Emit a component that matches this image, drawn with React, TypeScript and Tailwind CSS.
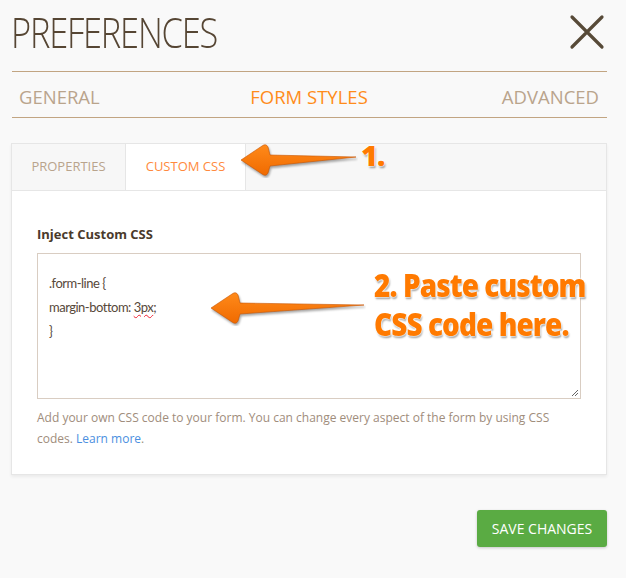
import React from 'react'

const SANS = { fontFamily: '"Open Sans", "Noto Sans", sans-serif' }

function Arrow({ className, width, height }: { className: string; width: number; height: number }) {
  // tip on the left, tail on the right, shaft tapering toward the tail
  return (
    <svg className={className} width={width} height={height} viewBox={`0 0 ${width} ${height}`}>
      <defs>
        <linearGradient id={`g${width}`} x1="0" y1="0" x2="0" y2="1">
          <stop offset="0" stopColor="#ff8a1a" />
          <stop offset="1" stopColor="#f06a00" />
        </linearGradient>
      </defs>
      <path
        d={`M ${width - 2} ${height / 2 - 3} L 32 ${height / 2 - 5} L 30 5 Q 28 1 24 4 L 3 ${height / 2} L 24 ${height - 4} Q 28 ${height - 1} 30 ${height - 5} L 32 ${height / 2 + 6} Z`}
        fill={`url(#g${width})`}
        stroke="#c85400"
        strokeWidth={0.6}
        strokeLinejoin="round"
        style={{ filter: 'drop-shadow(1px 2px 1px rgba(0,0,0,0.35))' }}
      />
    </svg>
  )
}

const LABEL_SHADOW = '0 0 2px #fff, 0 0 2px #fff, 0 0 3px #fff, 1px 2px 2px rgba(0,0,0,0.45)'

export default function App() {
  return (
    <div className="relative w-[626px] h-[578px] bg-[#f9f9f9] pl-3 pr-[19px] overflow-hidden" style={SANS}>
      <div className="flex items-center justify-between pb-2 h-[72px] border-b border-[#c2a582] pr-[2px]">
        <h1 className="text-[43px] font-light leading-none text-[#564634] tracking-[-1.5px] -ml-[1px] scale-x-[0.8] origin-left whitespace-nowrap">
          PREFERENCES
        </h1>
        <svg width="36" height="36" viewBox="0 0 36 36">
          <path d="M3 3 L33 33 M33 3 L3 33" stroke="#574a38" strokeWidth={3.2} strokeLinecap="round" />
        </svg>
      </div>
      <div className="flex items-center justify-between h-[46px] pt-1 border-b border-[#c2a582] pl-[7px] pr-[8px] text-[18.5px]">
        <span className="text-[#b9a48c] w-[120px]">GENERAL</span>
        <span className="text-[#ff8c1a]">FORM STYLES</span>
        <span className="text-[#b9a48c] w-[120px] text-right">ADVANCED</span>
      </div>

      <div className="mt-[25px] -ml-px bg-white border border-[#e6e6e6] shadow-[0_2px_3px_rgba(0,0,0,0.06)] h-[332px]">
        <div className="flex h-[47px] bg-[#f7f7f7] border-b border-[#e6e6e6] text-[13px]">
          <div className="w-[114px] flex items-center justify-center text-[#b9a48c] border-r border-[#e6e6e6]">PROPERTIES</div>
          <div className="w-[120px] flex items-center justify-center text-[#ff8a3d] bg-white border-r border-[#e6e6e6]">CUSTOM CSS</div>
        </div>
        <div className="px-[25px] pt-[34px]">
          <div className="text-[13px] font-bold text-[#4a3a2b]">Inject Custom CSS</div>
          <div
            className="mt-[8px] h-[146px] border border-[#d9cdc2] bg-white relative pl-[11px] pt-[17px] text-[13px] leading-[24px] tracking-[-0.5px] text-[#57483a]"
            style={{ fontFamily: 'Lato, "Open Sans", sans-serif' }}
          >
            <div>.form-line {'{'}</div>
            <div>
              margin-bottom:{' '}
              <span className="underline decoration-wavy decoration-[#e23] decoration-1 underline-offset-2">3px</span>;
            </div>
            <div>{'}'}</div>
            <svg className="absolute right-[1px] bottom-[1px]" width="8" height="8" viewBox="0 0 8 8">
              <path d="M7 1 L1 7 M7 4 L4 7" stroke="#666" strokeWidth={1} />
            </svg>
          </div>
          <p className="mt-[8px] text-[12px] leading-[21px] text-[#a08d7c] pr-[20px]">
            Add your own CSS code to your form. You can change every aspect of the form by using CSS codes.{' '}
            <a className="text-[#4a8fe0]">Learn more</a>.
          </p>
        </div>
      </div>

      <div className="flex justify-end mt-[35px]">
        <button className="w-[130px] h-[37px] rounded-[3px] bg-[#5aab43] text-white text-[14px] shadow-[0_1px_3px_rgba(0,0,0,0.2)]">
          SAVE CHANGES
        </button>
      </div>

      {/* annotations */}
      <Arrow className="absolute left-[238px] top-[142px]" width={120} height={36} />
      <div
        className="absolute left-[361px] top-[133px] text-[29px] font-extrabold text-[#ff7a00] tracking-[-1px]"
        style={{ textShadow: LABEL_SHADOW }}
      >
        1.
      </div>
      <Arrow className="absolute left-[208px] top-[290px]" width={158} height={36} />
      <div
        className="absolute left-[374px] top-[266px] text-[31px] leading-[39px] font-extrabold text-[#ff7a00] tracking-[-1px] scale-x-[0.9] origin-left whitespace-nowrap"
        style={{ textShadow: LABEL_SHADOW }}
      >
        <div>2. Paste custom</div>
        <div>CSS code here.</div>
      </div>
    </div>
  )
}
